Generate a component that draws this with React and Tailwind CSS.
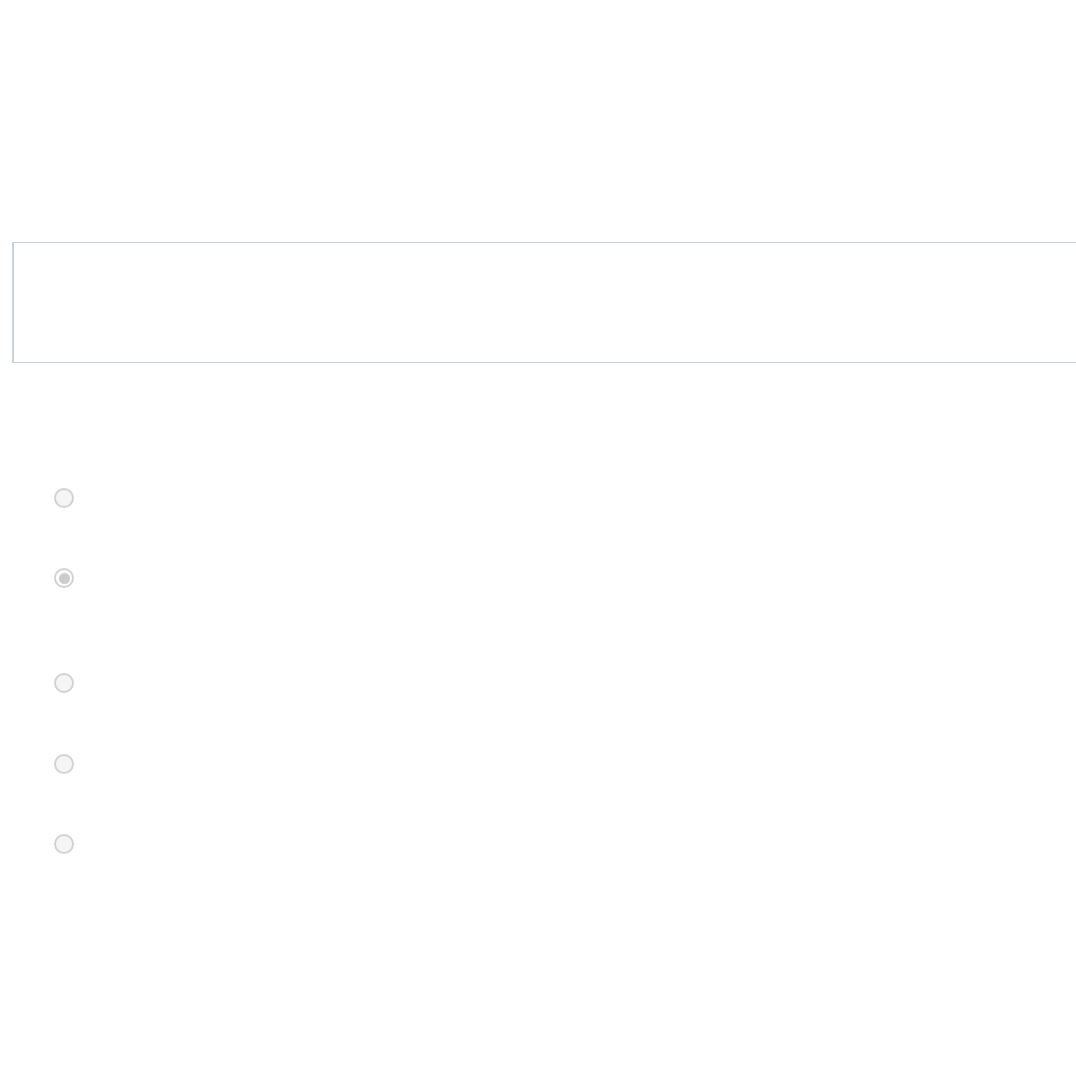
import React from "react";

function Radio({ checked, className }) {
  return (
    <div className={"flex h-[20px] w-[20px] items-center justify-center rounded-full border-2 border-[#d2d2d2] " + (checked ? "bg-white " : "bg-[#f5f5f5] ") + className}>
      {checked && <div className="h-[11px] w-[11px] rounded-full bg-[#cccccc]" />}
    </div>
  );
}

export default function App() {
  return (
    <div className="min-h-[1075px] w-full overflow-hidden bg-white" style={{ fontFamily: "'Liberation Sans', sans-serif" }}>
      <div className="pl-[12px] pt-[242px]">
        <div className="h-[121px] w-full border-y border-l-2 border-[#cbd1d9]" />
      </div>
      <div className="flex flex-col pl-[54px]">
        <Radio className="mt-[125px]" />
        <Radio checked className="mt-[60px]" />
        <Radio className="mt-[85px]" />
        <Radio className="mt-[61px]" />
        <Radio className="mt-[60px]" />
      </div>
    </div>
  );
}
